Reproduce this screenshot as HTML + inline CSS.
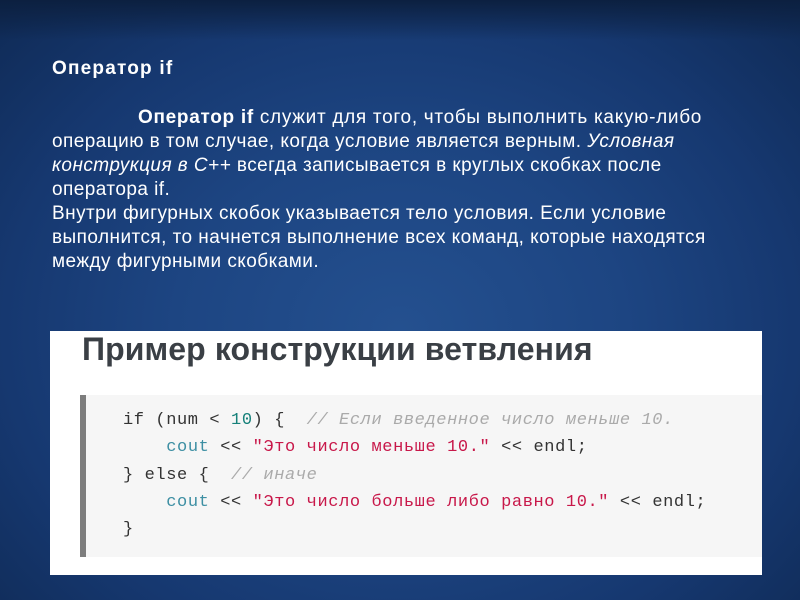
<!DOCTYPE html>
<html><head><meta charset="utf-8">
<style>
html,body{margin:0;padding:0}
body{width:800px;height:600px;overflow:hidden;position:relative;
background:radial-gradient(ellipse at 50% 55%,#24508f 0%,#1d4582 40%,#163870 70%,#0f2a55 100%);
font-family:"Liberation Sans",sans-serif;}
.top{position:absolute;left:0;top:0;width:800px;height:40px;background:linear-gradient(#0c2040,rgba(12,32,64,0))}
.t{position:absolute;left:52px;color:#fff;font-size:19px;letter-spacing:0.45px;white-space:nowrap;line-height:24px}
.box{position:absolute;left:50px;top:331px;width:712px;height:244px;background:#fff;}
.h{position:absolute;left:32px;top:0px;font-size:32px;font-weight:bold;color:#3a3f45;letter-spacing:0.1px}
.code{position:absolute;left:30px;top:64px;right:0;height:162px;background:#f6f6f6;border-left:6px solid #7d7d7d;}
.l{position:absolute;left:37px;font-family:"Liberation Mono",monospace;font-size:17px;color:#333;white-space:pre;letter-spacing:0.6px}
.c{color:#aaa;font-style:italic}.n{color:#16817a}.k{color:#3d8fa3}.s{color:#c8184a}
</style></head><body>
<div class="top"></div>
<div class="t" style="top:57px;font-weight:bold;font-size:19px;letter-spacing:1.2px">Оператор if</div>
<div class="t" style="top:106px;left:138px;letter-spacing:0.7px"><b>Оператор if</b> служит для того, чтобы выполнить какую-либо</div>
<div class="t" style="top:130px">операцию в том случае, когда условие является верным. <i>Условная</i></div>
<div class="t" style="top:154px"><i>конструкция в C++</i> всегда записывается в круглых скобках после</div>
<div class="t" style="top:178px">оператора if.</div>
<div class="t" style="top:202px">Внутри фигурных скобок указывается тело условия. Если условие</div>
<div class="t" style="top:226px">выполнится, то начнется выполнение всех команд, которые находятся</div>
<div class="t" style="top:250px">между фигурными скобками.</div>
<div class="box">
<div class="h">Пример конструкции ветвления</div>
<div class="code">
<div class="l" style="top:16px">if (num &lt; <span class="n">10</span>) {  <span class="c">// Если введенное число меньше 10.</span></div>
<div class="l" style="top:43px">    <span class="k">cout</span> &lt;&lt; <span class="s">"Это число меньше 10."</span> &lt;&lt; endl;</div>
<div class="l" style="top:71px">} else {  <span class="c">// иначе</span></div>
<div class="l" style="top:98px">    <span class="k">cout</span> &lt;&lt; <span class="s">"Это число больше либо равно 10."</span> &lt;&lt; endl;</div>
<div class="l" style="top:125px">}</div>
</div>
</div>
</body></html>
